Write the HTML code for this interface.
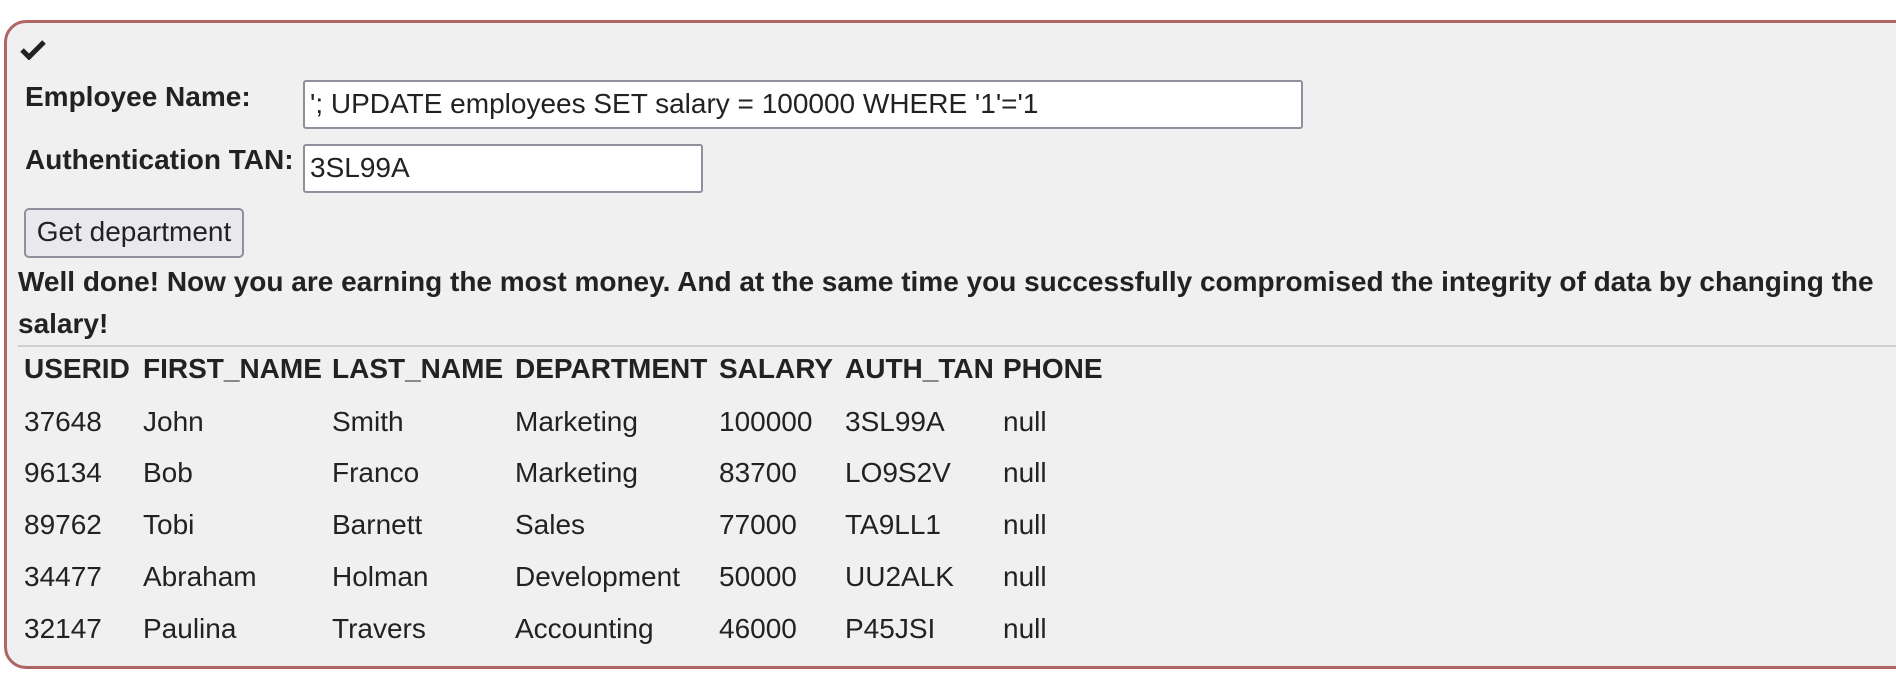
<!DOCTYPE html>
<html><head><style>
body{margin:0;width:1896px;height:682px;background:#fff;font-family:"Liberation Sans",Arial,sans-serif;color:#222;overflow:hidden;position:relative}
.box{position:absolute;left:4px;top:20px;width:1920px;height:649px;background:#f0f0f0;border:3px solid #b06464;border-radius:22px;box-sizing:border-box}
.a{position:absolute;white-space:nowrap;font-size:28px;line-height:32px}
.b{font-weight:bold}
.inp{position:absolute;background:#fff;border:2px solid #8f8f9d;border-radius:3px;box-sizing:border-box;font-size:28px;padding-left:5px;line-height:44px}
.btn{position:absolute;left:24px;top:208px;width:220px;height:50px;background:#e9e9ed;border:2px solid #8f8f9d;border-radius:5px;box-sizing:border-box;font-size:28px;text-align:center;line-height:44px;color:#222}
.hr{position:absolute;left:18px;top:345px;width:1900px;height:2px;background:#cfcfcf}
</style></head><body>
<div class="box"></div>
<svg style="position:absolute;left:20px;top:40px" width="26" height="20" viewBox="0 0 26 20"><path d="M2 10 L9 17 L24 2" fill="none" stroke="#222" stroke-width="5"/></svg>
<div class="a b" style="left:25px;top:81px">Employee Name:</div>
<div class="inp" style="left:303px;top:80px;width:1000px;height:49px">'; UPDATE employees SET salary = 100000 WHERE '1'='1</div>
<div class="a b" style="left:25px;top:144px">Authentication TAN:</div>
<div class="inp" style="left:303px;top:144px;width:400px;height:49px">3SL99A</div>
<div class="btn">Get department</div>
<div class="a b" style="left:18px;top:266px">Well done! Now you are earning the most money. And at the same time you successfully compromised the integrity of data by changing the</div>
<div class="a b" style="left:18px;top:308px">salary!</div>
<div class="hr"></div>
<div class="a b" style="left:24px;top:353px">USERID</div>
<div class="a b" style="left:143px;top:353px">FIRST_NAME</div>
<div class="a b" style="left:332px;top:353px">LAST_NAME</div>
<div class="a b" style="left:515px;top:353px">DEPARTMENT</div>
<div class="a b" style="left:719px;top:353px">SALARY</div>
<div class="a b" style="left:845px;top:353px">AUTH_TAN</div>
<div class="a b" style="left:1003px;top:353px">PHONE</div>

<div class="a" style="left:24px;top:406px">37648</div><div class="a" style="left:143px;top:406px">John</div><div class="a" style="left:332px;top:406px">Smith</div><div class="a" style="left:515px;top:406px">Marketing</div><div class="a" style="left:719px;top:406px">100000</div><div class="a" style="left:845px;top:406px">3SL99A</div><div class="a" style="left:1003px;top:406px">null</div>
<div class="a" style="left:24px;top:457px">96134</div><div class="a" style="left:143px;top:457px">Bob</div><div class="a" style="left:332px;top:457px">Franco</div><div class="a" style="left:515px;top:457px">Marketing</div><div class="a" style="left:719px;top:457px">83700</div><div class="a" style="left:845px;top:457px">LO9S2V</div><div class="a" style="left:1003px;top:457px">null</div>
<div class="a" style="left:24px;top:509px">89762</div><div class="a" style="left:143px;top:509px">Tobi</div><div class="a" style="left:332px;top:509px">Barnett</div><div class="a" style="left:515px;top:509px">Sales</div><div class="a" style="left:719px;top:509px">77000</div><div class="a" style="left:845px;top:509px">TA9LL1</div><div class="a" style="left:1003px;top:509px">null</div>
<div class="a" style="left:24px;top:561px">34477</div><div class="a" style="left:143px;top:561px">Abraham</div><div class="a" style="left:332px;top:561px">Holman</div><div class="a" style="left:515px;top:561px">Development</div><div class="a" style="left:719px;top:561px">50000</div><div class="a" style="left:845px;top:561px">UU2ALK</div><div class="a" style="left:1003px;top:561px">null</div>
<div class="a" style="left:24px;top:613px">32147</div><div class="a" style="left:143px;top:613px">Paulina</div><div class="a" style="left:332px;top:613px">Travers</div><div class="a" style="left:515px;top:613px">Accounting</div><div class="a" style="left:719px;top:613px">46000</div><div class="a" style="left:845px;top:613px">P45JSI</div><div class="a" style="left:1003px;top:613px">null</div>
</body></html>
